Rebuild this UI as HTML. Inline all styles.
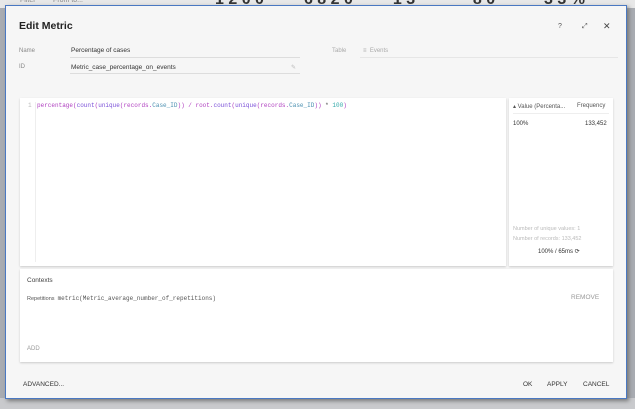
<!DOCTYPE html>
<html><head><style>
*{margin:0;padding:0;box-sizing:border-box}
body{width:635px;height:409px;overflow:hidden;background:#a9acb2;font-family:"Liberation Sans",sans-serif;position:relative}
.top{position:absolute;left:0;top:0;width:635px;height:8px;background:#e8e8e8}
.bot{position:absolute;left:0;top:398px;width:635px;height:11px;background:#c9cacd}
.dlg{position:absolute;left:5px;top:5px;width:622px;height:394px;background:#f6f6f6;border:1px solid #4a78c2;box-shadow:2px 2px 4px #777}
.t{position:absolute;white-space:nowrap}
.panel{position:absolute;background:#fff;box-shadow:0 1px 2px rgba(0,0,0,.18)}
.mono{font-family:"Liberation Mono",monospace}
.lbl{font-size:6px;color:#888}
.line{position:absolute;height:1px;background:#ddd}
</style></head><body>
<div class="top"></div>
<div class="t" style="left:20px;top:-3px;font-size:7px;color:#888">Filter &nbsp; &nbsp; &nbsp; &nbsp; From to...</div>
<div class="t" style="left:215px;top:-9px;font-size:16px;color:#333;font-weight:bold">1 2 0 0 &nbsp; &nbsp; &nbsp; &nbsp; 6 8 2 0 &nbsp; &nbsp; &nbsp; &nbsp; 1 3 &nbsp; &nbsp; &nbsp; &nbsp; &nbsp; &nbsp; 8 0 &nbsp; &nbsp; &nbsp; &nbsp; &nbsp; 3 3 %</div>
<div class="bot"></div>
<div class="dlg">
<div class="t" style="left:13px;top:14px;font-size:10.5px;color:#222;font-weight:bold">Edit Metric</div>
<div class="t" style="left:552px;top:17px;font-size:7px;color:#555">?</div>
<div class="t" style="left:576px;top:17px;font-size:7px;color:#555">⤢</div>
<div class="t" style="left:597px;top:15px;font-size:9px;color:#444">✕</div>
<div class="t lbl" style="left:13px;top:42px">Name</div>
<div class="t" style="left:65px;top:41px;font-size:6.5px;color:#333">Percentage of cases</div>
<div class="line" style="left:64px;top:51px;width:230px"></div>
<div class="t lbl" style="left:13px;top:58px">ID</div>
<div class="t" style="left:65px;top:58px;font-size:6.5px;color:#333">Metric_case_percentage_on_events</div>
<div class="t" style="left:285px;top:58px;font-size:6px;color:#bbb">✎</div>
<div class="line" style="left:64px;top:67px;width:230px"></div>
<div class="t lbl" style="left:326px;top:42px;color:#aaa">Table</div>
<div class="t lbl" style="left:357px;top:42px;color:#aaa">≡ &nbsp;Events</div>
<div class="line" style="left:354px;top:51px;width:258px;background:#e6e6e6"></div>
<div class="panel" style="left:14px;top:92px;width:486px;height:168px">
<div style="position:absolute;left:15px;top:4px;width:1px;height:160px;background:#eee"></div>
<div class="t mono" style="left:8px;top:4px;font-size:6px;color:#bbb">1</div>
<div class="t mono" style="left:17px;top:4px;font-size:6px;color:#b040c0">percentage(<span style="color:#7a4fd8">count</span>(<span style="color:#7a4fd8">unique</span>(records.<span style="color:#4a8fb0">Case_ID</span>)) / root.<span style="color:#7a4fd8">count</span>(<span style="color:#7a4fd8">unique</span>(records.<span style="color:#4a8fb0">Case_ID</span>)) <span style="color:#444">*</span> <span style="color:#3aa">100</span>)</div>
</div>
<div class="panel" style="left:503px;top:92px;width:104px;height:168px">
<div class="t" style="left:4px;top:5px;font-size:6px;color:#555">▴ Value (Percenta...</div>
<div class="t" style="left:68px;top:5px;font-size:6px;color:#555">Frequency</div>
<div class="line" style="left:4px;top:15px;width:96px;background:#eee"></div>
<div class="t" style="left:4px;top:23px;font-size:6px;color:#333">100%</div>
<div class="t" style="left:76px;top:23px;font-size:6px;color:#333">133,452</div>
<div class="t" style="left:4px;top:128px;font-size:5.5px;color:#bbb">Number of unique values: 1</div>
<div class="t" style="left:4px;top:138px;font-size:5.5px;color:#bbb">Number of records: 133,452</div>
<div class="t" style="left:29px;top:150px;font-size:6px;color:#333">100% / 65ms ⟳</div>
</div>
<div class="panel" style="left:14px;top:263px;width:593px;height:93px">
<div class="t" style="left:7px;top:8px;font-size:6.5px;color:#444">Contexts</div>
<div class="t" style="left:7px;top:26px;font-size:5.5px;color:#555">Repetitions &nbsp;<span class="mono" style="font-size:6px">metric(Metric_average_number_of_repetitions)</span></div>
<div class="t" style="left:551px;top:25px;font-size:6.5px;color:#999">REMOVE</div>
<div class="t" style="left:7px;top:77px;font-size:6px;color:#999">ADD</div>
</div>
<div class="t" style="left:17px;top:375px;font-size:6.5px;color:#333">ADVANCED...</div>
<div class="t" style="left:517px;top:375px;font-size:6.5px;color:#333">OK</div>
<div class="t" style="left:541px;top:375px;font-size:6.5px;color:#333">APPLY</div>
<div class="t" style="left:577px;top:375px;font-size:6.5px;color:#333">CANCEL</div>
</div>
</body></html>
